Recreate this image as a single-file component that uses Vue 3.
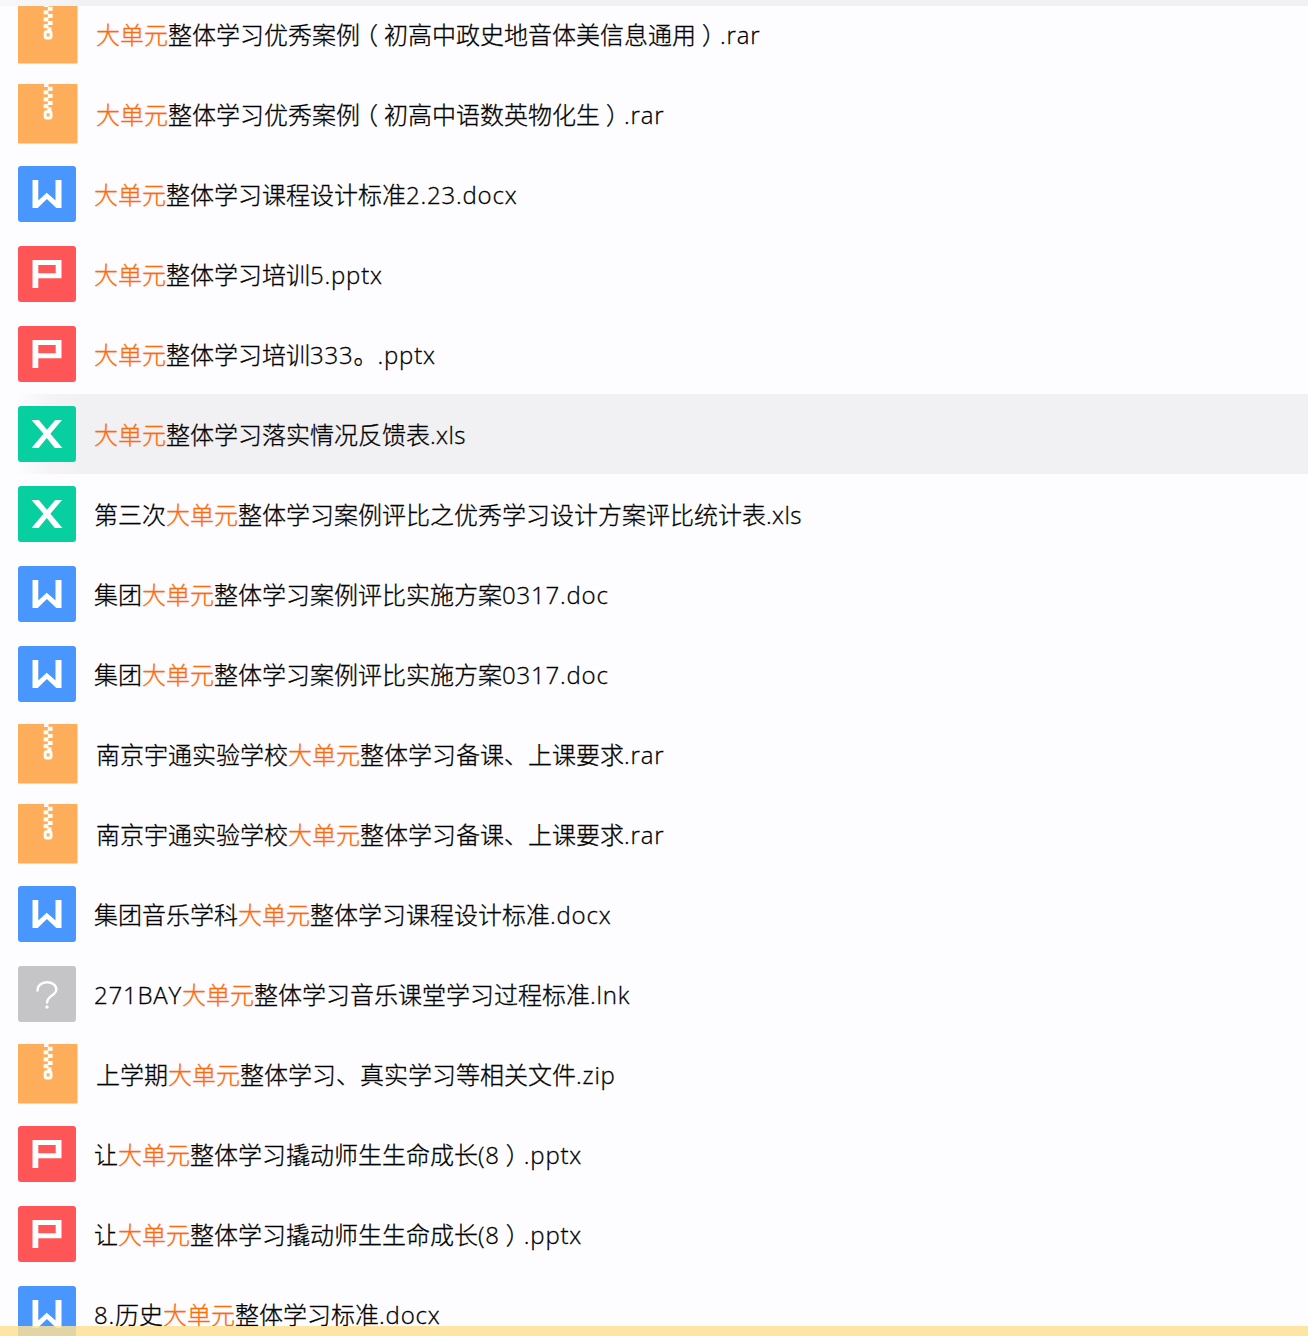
<script setup>
const rows = [
  { kind: 'zip', before: '', after: '整体学习优秀案例（初高中政史地音体美信息通用）.rar' },
  { kind: 'zip', before: '', after: '整体学习优秀案例（初高中语数英物化生）.rar' },
  { kind: 'doc', before: '', after: '整体学习课程设计标准2.23.docx' },
  { kind: 'ppt', before: '', after: '整体学习培训5.pptx' },
  { kind: 'ppt', before: '', after: '整体学习培训333。.pptx' },
  { kind: 'xls', before: '', after: '整体学习落实情况反馈表.xls', active: true },
  { kind: 'xls', before: '第三次', after: '整体学习案例评比之优秀学习设计方案评比统计表.xls' },
  { kind: 'doc', before: '集团', after: '整体学习案例评比实施方案0317.doc' },
  { kind: 'doc', before: '集团', after: '整体学习案例评比实施方案0317.doc' },
  { kind: 'zip', before: '南京宇通实验学校', after: '整体学习备课、上课要求.rar' },
  { kind: 'zip', before: '南京宇通实验学校', after: '整体学习备课、上课要求.rar' },
  { kind: 'doc', before: '集团音乐学科', after: '整体学习课程设计标准.docx' },
  { kind: 'unknown', before: '271BAY', after: '整体学习音乐课堂学习过程标准.lnk' },
  { kind: 'zip', before: '上学期', after: '整体学习、真实学习等相关文件.zip' },
  { kind: 'ppt', before: '让', after: '整体学习撬动师生生命成长(8）.pptx' },
  { kind: 'ppt', before: '让', after: '整体学习撬动师生生命成长(8）.pptx' },
  { kind: 'doc', before: '8.历史', after: '整体学习标准.docx' },
]
const keyword = '大单元'

// Splits a name into runs of Latin text, full-width brackets and Chinese text.
function runs(text) {
  return text.split(/([（）]|[\x20-\x7e]+)/).filter(Boolean).map((part) => ({
    text: part,
    type: /[（）]/.test(part) ? 'paren' : /^[\x20-\x7e]/.test(part) ? 'latin' : 'han',
  }))
}
const pieces = (row) => [...runs(row.before), { text: keyword, type: 'hit' }, ...runs(row.after)]
</script>

<template>
  <main class="results">
    <ul class="list">
      <li v-for="(row, i) in rows" :key="i" class="row" :class="[row.kind, { active: row.active }]">
        <svg v-if="row.kind === 'zip'" class="icon" width="60" height="60" viewBox="0 0 60 60">
          <rect width="59.5" height="59.5" rx="1" fill="#feae5b" />
          <g fill="#fffdf5">
            <rect x="26" y="0" width="4.5" height="3" />
            <rect x="29.8" y="2.8" width="4.8" height="4" />
            <rect x="25.6" y="6.4" width="4.8" height="4" />
            <rect x="29.8" y="10" width="4.8" height="4" />
            <rect x="25.6" y="13.4" width="4.8" height="4" />
            <rect x="29.8" y="17" width="4.8" height="4" />
            <rect x="25.6" y="20.2" width="4.8" height="4" />
            <rect x="29.4" y="23.5" width="4" height="3.5" />
          </g>
          <rect x="27.2" y="27.7" width="5.8" height="6.2" rx="1.4" fill="#feae5b" stroke="#fffdf5" stroke-width="3" />
        </svg>
        <svg v-else class="icon" width="58" height="56" viewBox="0 0 58 56">
          <rect class="tile" width="58" height="56" rx="3" />
          <path v-if="row.kind === 'doc'" fill="#fff" d="M14.5 14h5.8v20.5l8.5-7.8 8.7 7.8V14h6v28h-5.2l-9.4-9-9.2 9h-5.2z" />
          <path v-else-if="row.kind === 'ppt'" fill="#fff" fill-rule="evenodd" d="M14.5 14h29v18.2H20.3V42h-5.8zM20.3 19v8.2h17.4V19z" />
          <path v-else-if="row.kind === 'xls'" fill="#fff" d="M13.5 14h7.3l8.2 9.8L37.2 14h6.8L32.4 27.8 44.4 42h-7.6L28.8 32 20.600 42h-7.100l12-14.200z" />
          <g v-else>
            <path fill="none" stroke="#fff" stroke-width="2.4" stroke-linecap="round" d="M19.500 24.500c0-5 4.200-8.200 9.500-8.200s9.300 2.800 9.300 7.200c0 6-9.200 6.200-9.200 13" />
            <circle cx="29" cy="41" r="1.7" fill="#fff" />
          </g>
        </svg>
        <span class="name"><span v-for="(piece, n) in pieces(row)" :key="n" :class="piece.type">{{ piece.text }}</span></span>
      </li>
    </ul>
    <div class="edge top"></div>
    <div class="edge bottom"></div>
  </main>
</template>

<style>
body { margin: 0; background: #fdfcfe; }
</style>

<style scoped>
.results {
  position: relative;
  width: 100%;
  height: 1336px;
  overflow: hidden;
  background: #fdfcfe;
}
.list { list-style: none; margin: -6px 0 0; padding: 0; }
.row {
  box-sizing: border-box;
  display: flex;
  align-items: center;
  height: 80px;
  padding-left: 18px;
  gap: 18px;
}
.row.active { background: linear-gradient(90deg, #fdfcfe 16px, #f5f3f6 50px, #f1f0f3 84px); }
.icon { display: block; flex: none; }
.doc .tile { fill: #4896fe; }
.ppt .tile { fill: #fe5656; }
.xls .tile { fill: #08cfa0; }
.unknown .tile { fill: #c5c4c6; }
.name {
  padding-top: 2px;
  font-family: "Open Sans", "Noto Sans CJK SC", sans-serif;
  font-size: 24px;
  font-weight: 300;
  line-height: 36px;
  white-space: nowrap;
  color: #000;
  -webkit-text-stroke: 0.3px currentColor;
}
.hit { color: #ff6a08; }
.latin { letter-spacing: 0.8px; }
.xls .latin { letter-spacing: 0.4px; }
.paren { padding: 0 6px; font-feature-settings: "halt"; }
.edge { position: absolute; left: 0; right: 0; }
.edge.top { top: 0; height: 6px; background: linear-gradient(90deg, #f8f7f9, #f1f0f3 90px); }
.edge.bottom { bottom: 0; height: 10px; background: rgba(253, 224, 151, 0.85); }
</style>
